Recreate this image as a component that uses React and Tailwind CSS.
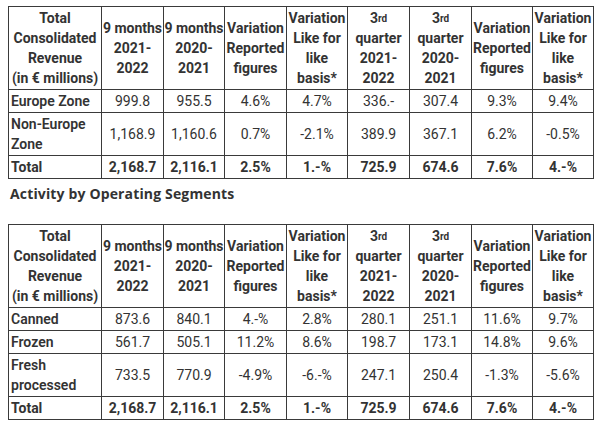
const segments = {
  zones: [
    { label: "Europe Zone", v: ["999.8", "955.5", "4.6%", "4.7%", "336.-", "307.4", "9.3%", "9.4%"] },
    { label: "Non-Europe Zone", v: ["1,168.9", "1,160.6", "0.7%", "-2.1%", "389.9", "367.1", "6.2%", "-0.5%"] },
  ],
  ops: [
    { label: "Canned", v: ["873.6", "840.1", "4.-%", "2.8%", "280.1", "251.1", "11.6%", "9.7%"] },
    { label: "Frozen", v: ["561.7", "505.1", "11.2%", "8.6%", "198.7", "173.1", "14.8%", "9.6%"] },
    { label: "Fresh processed", v: ["733.5", "770.9", "-4.9%", "-6.-%", "247.1", "250.4", "-1.3%", "-5.6%"] },
  ],
};

const total = ["2,168.7", "2,116.1", "2.5%", "1.-%", "725.9", "674.6", "7.6%", "4.-%"];

const widths = [93, 62, 61, 62, 61, 62, 62, 61, 61];

const cell = "border border-[#3a3a3a] px-[2px] py-[1px] align-middle";
const head = "border border-[#3a3a3a] px-0 py-[1px] align-middle whitespace-nowrap";

const Third = () => (
  <>
    3<sup className="text-[10px] relative -top-[1px]">rd</sup>
  </>
);

const RevenueTable = ({ rows }) => (
  <table className="table-fixed border-collapse w-[585px] text-[14px] leading-[20px] text-[#333]">
    <colgroup>
      {widths.map((w, i) => (
        <col key={i} style={{ width: w }} />
      ))}
    </colgroup>
    <thead>
      <tr className="font-bold">
        <th className={head}>Total<br />Consolidated<br />Revenue<br />(in € millions)</th>
        <th className={head}>9 months<br />2021-<br />2022</th>
        <th className={head}>9 months<br />2020-<br />2021</th>
        <th className={head}>Variation<br />Reported<br />figures</th>
        <th className={head}>Variation<br />Like for<br />like<br />basis*</th>
        <th className={head}><Third /><br />quarter<br />2021-<br />2022</th>
        <th className={head}><Third /><br />quarter<br />2020-<br />2021</th>
        <th className={head}>Variation<br />Reported<br />figures</th>
        <th className={head}>Variation<br />Like for<br />like<br />basis*</th>
      </tr>
    </thead>
    <tbody>
      {rows.map((r) => (
        <tr key={r.label}>
          <td className={`${cell} text-left font-semibold`}>{r.label}</td>
          {r.v.map((x, i) => (
            <td key={i} className={`${cell} text-center`}>{x}</td>
          ))}
        </tr>
      ))}
      <tr className="font-bold">
        <td className={`${cell} text-left`}>Total</td>
        {total.map((x, i) => (
          <td key={i} className={`${cell} text-center`}>{x}</td>
        ))}
      </tr>
    </tbody>
  </table>
);

export default function App() {
  return (
    <div className="w-[600px] h-[425px] bg-white overflow-hidden pl-[8px] pt-[6px] font-['Roboto',sans-serif]">
      <RevenueTable rows={segments.zones} />
      <h3 className="mt-[5px] mb-[20px] pl-[2px] text-[14px] leading-[20px] font-bold tracking-[0.15px] text-[#333] font-['Open_Sans',sans-serif]">
        Activity by Operating Segments
      </h3>
      <RevenueTable rows={segments.ops} />
    </div>
  );
}
